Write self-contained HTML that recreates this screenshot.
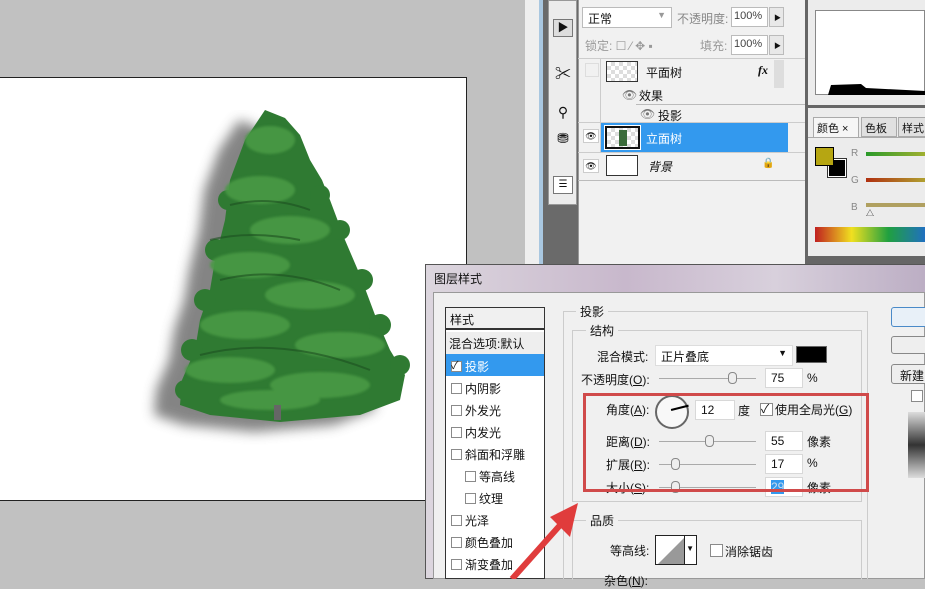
<!DOCTYPE html>
<html><head><meta charset="utf-8">
<style>
*{margin:0;padding:0;box-sizing:border-box}
body{width:925px;height:579px;overflow:hidden;position:relative;background:#c1c1c1;font-family:"Liberation Sans","Noto Sans CJK SC",sans-serif;font-size:12px;color:#111}
.a{position:absolute;white-space:nowrap}
.cb{position:absolute;width:11px;height:11px;border:1px solid #8a8a8a;background:#fff}
.inp{position:absolute;background:#fff;border:1px solid #d8d8d8;height:20px;padding:2px 5px;font-size:12px}
.sl{position:absolute;height:1px;background:#aaa}
.th{position:absolute;width:9px;height:12px;border:1px solid #888;border-radius:4px;background:#eee}
</style></head><body>
<!-- canvas -->
<div class="a" style="left:0;top:77px;width:467px;height:424px;background:#fff;border:1px solid #222;border-left:none"></div>
<svg class="a" style="left:100px;top:90px" width="320" height="360">
<defs>
<filter id="sh" filterUnits="userSpaceOnUse" x="0" y="0" width="320" height="360"><feGaussianBlur stdDeviation="6"/></filter>
<filter id="b2"><feGaussianBlur stdDeviation="1.2"/></filter></defs>
<path filter="url(#sh)" opacity="0.8" transform="translate(24,20)" d="M115,10 L135,18 L150,35 L160,60 L172,80 L180,100 L195,140 L210,175 L225,215 L240,250 L255,275 L250,300 L210,315 L130,322 L60,315 L30,305 L32,280 L45,250 L50,220 L60,190 L65,160 L75,120 L80,80 L95,40 Z" fill="#666"/>
<g transform="translate(50,10)">
<path d="M115,10 L135,18 L150,35 L160,60 L172,80 L180,100 L195,140 L210,175 L225,215 L240,250 L255,275 L250,300 L210,315 L130,322 L60,315 L30,305 L32,280 L45,250 L50,220 L60,190 L65,160 L75,120 L80,80 L95,40 Z" fill="#2f7a32"/>
<g fill="#2f7a32">
<circle cx="170" cy="95" r="10"/><circle cx="190" cy="130" r="10"/><circle cx="212" cy="180" r="11"/><circle cx="230" cy="225" r="11"/><circle cx="250" cy="265" r="10"/>
<circle cx="78" cy="100" r="10"/><circle cx="66" cy="150" r="11"/><circle cx="55" cy="200" r="11"/><circle cx="42" cy="250" r="11"/><circle cx="35" cy="290" r="10"/>
</g>
<g filter="url(#b2)" fill="#4a9a45" opacity="0.9">
<ellipse cx="120" cy="40" rx="25" ry="14"/><ellipse cx="110" cy="90" rx="35" ry="14"/><ellipse cx="140" cy="130" rx="40" ry="14"/><ellipse cx="100" cy="165" rx="40" ry="13"/><ellipse cx="160" cy="195" rx="45" ry="14"/><ellipse cx="95" cy="225" rx="45" ry="14"/><ellipse cx="190" cy="245" rx="45" ry="13"/><ellipse cx="80" cy="270" rx="45" ry="13"/><ellipse cx="170" cy="285" rx="50" ry="13"/><ellipse cx="120" cy="300" rx="50" ry="10"/>
</g>
<g stroke="#1d4e20" stroke-width="2" fill="none" opacity="0.6">
<path d="M80,105 q40,-10 80,5 M70,180 q60,-15 120,10 M50,255 q80,-20 170,15 M60,140 q40,-10 90,0"/>
</g>
<rect x="124" y="305" width="7" height="15" fill="#666"/>
</g>
</svg>
<!-- scrollbar and tool strip -->
<div class="a" style="left:525px;top:0;width:15px;height:270px;background:#efefef"></div>
<div class="a" style="left:539px;top:0;width:4px;height:270px;background:#a9c7e0"></div>
<div class="a" style="left:543px;top:0;width:35px;height:270px;background:#6a6a6a"></div>
<div class="a" style="left:548px;top:0;width:29px;height:205px;background:#ececec;border:1px solid #999"></div>
<div class="a" style="left:553px;top:19px;width:20px;height:18px;border:1px solid #777;background:#ddd;font-size:11px;text-align:center;line-height:16px">▶</div>
<div class="a" style="left:553px;top:60px;width:20px;height:22px;font-size:16px;text-align:center">✂</div>
<div class="a" style="left:553px;top:104px;width:20px;height:22px;font-size:14px;text-align:center">⚲</div>
<div class="a" style="left:553px;top:130px;width:20px;height:22px;font-size:14px;text-align:center">⛃</div>
<div class="a" style="left:553px;top:176px;width:20px;height:18px;border:1px solid #777;background:#fff;font-size:10px;text-align:center;line-height:16px">☰</div>
<!-- layers panel -->
<div class="a" style="left:578px;top:0;width:228px;height:270px;background:#f1f1f1;border-left:1px solid #999"></div>
<div class="a" style="left:582px;top:7px;width:90px;height:21px;background:#fff;border:1px solid #bbb;padding:2px 5px">正常<span style="float:right;color:#999;font-size:9px">▼</span></div>
<div class="a" style="left:677px;top:10px;color:#888">不透明度:</div>
<div class="a" style="left:731px;top:7px;width:37px;height:20px;border:1px solid #bbb;background:#fff;font-size:11px;padding:2px 2px;color:#444">100%</div>
<div class="a" style="left:769px;top:7px;width:15px;height:20px;border:1px solid #bbb;background:#e8e8e8;font-size:7px;padding:5px 4px">▶</div>
<div class="a" style="left:585px;top:37px;color:#999">锁定: ☐ ⁄ ✥ ▪</div>
<div class="a" style="left:700px;top:37px;color:#999">填充:</div>
<div class="a" style="left:731px;top:35px;width:37px;height:20px;border:1px solid #bbb;background:#fff;font-size:11px;padding:2px 2px;color:#444">100%</div>
<div class="a" style="left:769px;top:35px;width:15px;height:20px;border:1px solid #bbb;background:#e8e8e8;font-size:7px;padding:5px 4px">▶</div>
<div class="a" style="left:578px;top:58px;width:228px;height:1px;background:#ccc"></div>
<div class="a" style="left:600px;top:58px;width:1px;height:94px;background:#ccc"></div>
<div class="a" style="left:585px;top:63px;width:14px;height:14px;border:1px solid #ddd"></div>
<div class="a" style="left:606px;top:61px;width:32px;height:21px;border:1px solid #333;background:repeating-conic-gradient(#ddd 0 25%,#fff 0 50%) 0 0/8px 8px"></div>
<div class="a" style="left:646px;top:64px">平面树</div>
<div class="a" style="left:758px;top:63px;font-style:italic;font-weight:bold;font-family:'Liberation Serif',serif">fx</div>
<div class="a" style="left:774px;top:60px;width:10px;height:28px;background:#ddd"></div>
<div class="a" style="left:622px;top:88px;color:#777">👁</div><div class="a" style="left:639px;top:87px">效果</div>
<div class="a" style="left:636px;top:104px;width:170px;height:1px;background:#bbb"></div>
<div class="a" style="left:640px;top:107px;color:#777">👁</div><div class="a" style="left:658px;top:107px">投影</div>
<div class="a" style="left:578px;top:122px;width:227px;height:1px;background:#ccc"></div>
<div class="a" style="left:601px;top:123px;width:187px;height:29px;background:#3399ee"></div>
<div class="a" style="left:583px;top:129px;width:16px;height:14px;border:1px solid #ccc;background:#fff;font-size:9px;line-height:12px;text-align:center">👁</div>
<div class="a" style="left:605px;top:126px;width:35px;height:23px;border:2px solid #111;outline:1px solid #fff;background:repeating-conic-gradient(#ddd 0 25%,#fff 0 50%) 0 0/8px 8px"><div style="margin:2px auto;width:8px;height:16px;background:#3a6b3a"></div></div>
<div class="a" style="left:646px;top:130px;color:#fff">立面树</div>
<div class="a" style="left:578px;top:152px;width:227px;height:1px;background:#ccc"></div>
<div class="a" style="left:583px;top:159px;width:16px;height:14px;border:1px solid #ccc;background:#fff;font-size:9px;line-height:12px;text-align:center">👁</div>
<div class="a" style="left:606px;top:155px;width:32px;height:21px;border:1px solid #333;background:#fff"></div>
<div class="a" style="left:648px;top:158px;font-style:italic">背景</div>
<div class="a" style="left:762px;top:158px;font-size:10px">🔒</div>
<div class="a" style="left:578px;top:180px;width:227px;height:1px;background:#bbb"></div>
<!-- right panel -->
<div class="a" style="left:805px;top:0;width:120px;height:270px;background:#666"></div>
<div class="a" style="left:808px;top:0;width:117px;height:105px;background:#ececec"></div>
<div class="a" style="left:815px;top:10px;width:110px;height:85px;background:#fff;border:1px solid #888"></div>
<svg class="a" style="left:816px;top:80px" width="109" height="15"><path d="M0,15 L12,15 L15,5 L45,4 L50,8 L109,11 L109,15 Z" fill="#000"/></svg>
<div class="a" style="left:808px;top:108px;width:117px;height:148px;background:#ececec"></div>
<div class="a" style="left:813px;top:117px;width:46px;height:20px;background:#f6f6f6;border:1px solid #aaa;border-bottom:none;padding:2px 3px;font-size:11px">颜色 ×</div>
<div class="a" style="left:861px;top:117px;width:36px;height:20px;background:#e0e0e0;border:1px solid #aaa;padding:2px 3px;font-size:11px">色板</div>
<div class="a" style="left:898px;top:117px;width:30px;height:20px;background:#e0e0e0;border:1px solid #aaa;padding:2px 3px;font-size:11px">样式</div>
<div class="a" style="left:808px;top:137px;width:117px;height:1px;background:#aaa"></div>
<div class="a" style="left:828px;top:159px;width:18px;height:18px;background:#000;border:1px solid #fff;outline:1px solid #333"></div>
<div class="a" style="left:815px;top:147px;width:19px;height:19px;background:#b6a612;border:1px solid #000"></div>
<div class="a" style="left:851px;top:148px;color:#888;font-size:10px">R</div>
<div class="a" style="left:866px;top:152px;width:59px;height:4px;background:linear-gradient(90deg,#2a9a2a,#a0b030)"></div>
<div class="a" style="left:851px;top:175px;color:#888;font-size:10px">G</div>
<div class="a" style="left:866px;top:178px;width:59px;height:4px;background:linear-gradient(90deg,#b03010,#b0a030)"></div>
<div class="a" style="left:851px;top:202px;color:#888;font-size:10px">B</div>
<div class="a" style="left:866px;top:203px;width:59px;height:4px;background:#b0a060"></div>
<div class="a" style="left:866px;top:208px;font-size:8px">△</div>
<div class="a" style="left:815px;top:227px;width:110px;height:15px;background:linear-gradient(90deg,#c02020,#f0e020,#20a040,#2070c0)"></div>
<!-- dialog -->
<div class="a" style="left:425px;top:264px;width:500px;height:315px;background:linear-gradient(90deg,#dcd6de,#c8b8cc 40%,#d8d0dc 70%,#bcaec4);border:1px solid #555;border-right:none"></div>
<div class="a" style="left:434px;top:270px;font-size:12px">图层样式</div>
<div class="a" style="left:433px;top:292px;width:492px;height:287px;background:#f0f0f0;border:1px solid #999"></div>
<!-- style list -->
<div class="a" style="left:445px;top:307px;width:100px;height:272px;background:#fff;border:1px solid #333"></div>
<div class="a" style="left:446px;top:308px;width:98px;height:22px;background:#f0f0f0;border-bottom:2px solid #333;padding:3px 4px">样式</div>
<div class="a" style="left:446px;top:332px;width:98px;height:22px;background:#eee;padding:3px 3px">混合选项:默认</div>
<div class="a" style="left:446px;top:354px;width:98px;height:22px;background:#3399ee"></div>
<div class="cb" style="left:451px;top:361px"></div><div class="a" style="left:451px;top:357px;font-size:11px;color:#222">✓</div>
<div class="a" style="left:465px;top:358px;color:#fff">投影</div>
<div class="cb" style="left:451px;top:383px"></div><div class="a" style="left:465px;top:380px">内阴影</div>
<div class="cb" style="left:451px;top:405px"></div><div class="a" style="left:465px;top:402px">外发光</div>
<div class="cb" style="left:451px;top:427px"></div><div class="a" style="left:465px;top:424px">内发光</div>
<div class="cb" style="left:451px;top:449px"></div><div class="a" style="left:465px;top:446px">斜面和浮雕</div>
<div class="cb" style="left:465px;top:471px"></div><div class="a" style="left:479px;top:468px">等高线</div>
<div class="cb" style="left:465px;top:493px"></div><div class="a" style="left:479px;top:490px">纹理</div>
<div class="cb" style="left:451px;top:515px"></div><div class="a" style="left:465px;top:512px">光泽</div>
<div class="cb" style="left:451px;top:537px"></div><div class="a" style="left:465px;top:534px">颜色叠加</div>
<div class="cb" style="left:451px;top:559px"></div><div class="a" style="left:465px;top:556px">渐变叠加</div>
<!-- groups -->
<div class="a" style="left:563px;top:311px;width:305px;height:268px;border:1px solid #ccc;border-bottom:none"></div>
<div class="a" style="left:576px;top:303px;background:#f0f0f0;padding:0 4px">投影</div>
<div class="a" style="left:572px;top:330px;width:290px;height:172px;border:1px solid #ccc"></div>
<div class="a" style="left:586px;top:322px;background:#f0f0f0;padding:0 4px">结构</div>
<div class="a" style="left:597px;top:348px">混合模式:</div>
<div class="a" style="left:655px;top:345px;width:138px;height:21px;background:#fff;border:1px solid #ddd;padding:2px 5px">正片叠底<span style="float:right;font-size:9px">▼</span></div>
<div class="a" style="left:796px;top:346px;width:31px;height:17px;background:#000;border:1px solid #666"></div>
<div class="a" style="left:581px;top:371px">不透明度(<u>O</u>):</div>
<div class="sl" style="left:659px;top:378px;width:97px"></div><div class="th" style="left:728px;top:372px"></div>
<div class="inp" style="left:765px;top:368px;width:38px">75</div><div class="a" style="left:807px;top:371px">%</div>
<div class="a" style="left:606px;top:401px">角度(<u>A</u>):</div>
<div class="a" style="left:655px;top:395px;width:34px;height:34px;border:2px solid #666;border-radius:50%;background:#f8f8f8"></div>
<div class="a" style="left:671px;top:409px;width:18px;height:1.5px;background:#000;transform:rotate(-14deg);transform-origin:left"></div>
<div class="inp" style="left:695px;top:400px;width:40px">12</div><div class="a" style="left:738px;top:402px">度</div>
<div class="cb" style="left:760px;top:403px;width:13px;height:13px"></div><div class="a" style="left:761px;top:400px;font-size:12px">✓</div>
<div class="a" style="left:775px;top:401px">使用全局光(<u>G</u>)</div>
<div class="a" style="left:606px;top:433px">距离(<u>D</u>):</div>
<div class="sl" style="left:659px;top:441px;width:97px"></div><div class="th" style="left:705px;top:435px"></div>
<div class="inp" style="left:765px;top:431px;width:38px">55</div><div class="a" style="left:807px;top:433px">像素</div>
<div class="a" style="left:606px;top:456px">扩展(<u>R</u>):</div>
<div class="sl" style="left:659px;top:464px;width:97px"></div><div class="th" style="left:671px;top:458px"></div>
<div class="inp" style="left:765px;top:454px;width:38px">17</div><div class="a" style="left:807px;top:456px">%</div>
<div class="a" style="left:606px;top:479px">大小(<u>S</u>):</div>
<div class="sl" style="left:659px;top:487px;width:97px"></div><div class="th" style="left:671px;top:481px"></div>
<div class="inp" style="left:765px;top:477px;width:38px"><span style="background:#3399ee;color:#cde">29</span></div><div class="a" style="left:807px;top:479px">像素</div>
<div class="a" style="left:583px;top:393px;width:286px;height:99px;border:3px solid #d04a4a"></div>
<div class="a" style="left:572px;top:520px;width:290px;height:60px;border:1px solid #ccc;border-bottom:none"></div>
<div class="a" style="left:586px;top:512px;background:#f0f0f0;padding:0 4px">品质</div>
<div class="a" style="left:610px;top:542px">等高线:</div>
<div class="a" style="left:655px;top:535px;width:42px;height:30px;border:1px solid #222;background:#fff"><svg width="28" height="28"><path d="M2,28 L28,2 L28,28 Z" fill="#999"/></svg><span style="position:absolute;right:2px;top:8px;font-size:8px">▼</span></div>
<div class="a" style="left:684px;top:536px;width:1px;height:28px;background:#222"></div>
<div class="cb" style="left:710px;top:544px;width:13px;height:13px"></div><div class="a" style="left:725px;top:543px">消除锯齿</div>
<div class="a" style="left:604px;top:572px">杂色(<u>N</u>):</div>
<!-- right buttons -->
<div class="a" style="left:891px;top:307px;width:40px;height:20px;border:1px solid #4a8ac8;border-radius:3px;background:#e8f0f8"></div>
<div class="a" style="left:891px;top:336px;width:40px;height:18px;border:1px solid #888;border-radius:3px;background:#eee"></div>
<div class="a" style="left:891px;top:364px;width:40px;height:20px;border:1px solid #888;border-radius:3px;background:#eee;padding:2px 8px">新建</div>
<div class="cb" style="left:911px;top:390px;width:12px;height:12px"></div>
<div class="a" style="left:908px;top:412px;width:17px;height:66px;background:linear-gradient(#ddd,#333 50%,#ddd)"></div>
<!-- arrow -->
<svg class="a" style="left:500px;top:495px" width="90" height="84"><path d="M12,84 L62,28" stroke="#e03c3c" stroke-width="6"/><path d="M78,8 L50,22 L70,42 Z" fill="#e03c3c"/></svg>
</body></html>
